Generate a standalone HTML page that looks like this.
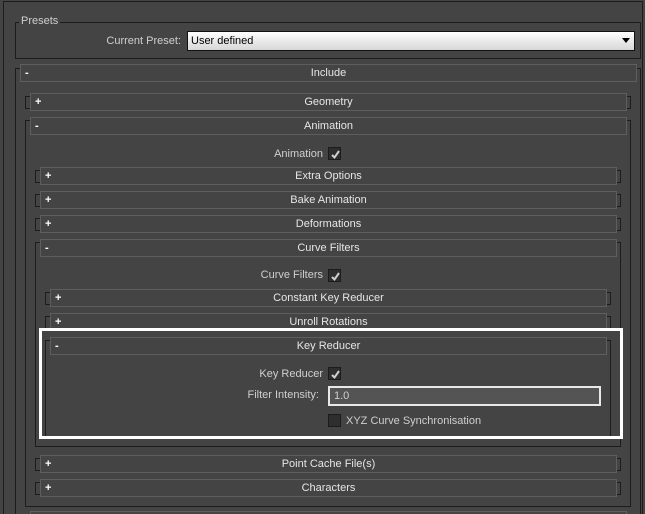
<!DOCTYPE html>
<html><head><meta charset="utf-8"><style>
html,body{margin:0;padding:0;width:645px;height:514px;overflow:hidden;}
body{background:#444;position:relative;font-family:"Liberation Sans",sans-serif;font-size:11px;color:#dcdcdc;}
.a{position:absolute;box-sizing:border-box;}
.box{border:1px solid #1c1c1c;}
.hd{border:1px solid #5e5e5e;background:#444;height:18px;line-height:17px;text-align:center;color:#e6e6e6;}
.hd .s{position:absolute;left:4px;top:0;font-weight:bold;color:#fff;}
.lbl{color:#cfcfcf;white-space:nowrap;}
.r{text-align:right;width:200px;}
.cb{width:13px;height:13px;background:#2e2e2e;border:1px solid #1c1c1c;}
.cb svg{position:absolute;left:1px;top:1px;}
</style></head><body>
<div class="a" style="left:3px;top:1px;width:640px;height:513px;border:1px solid #1c1c1c;border-bottom:none;"></div>
<div class="a box" style="left:15px;top:22px;width:626px;height:37px;"></div>
<div class="a lbl" style="left:19px;top:15px;background:#444;padding:0 2px;">Presets</div>
<div class="a lbl r" style="left:-19px;top:35px;">Current Preset:</div>
<div class="a" style="left:187px;top:31px;width:448px;height:20px;border:1px solid #111;background:linear-gradient(#fff,#e6e6e6 60%,#d8d8d8);color:#000;line-height:18px;padding-left:3px;">User defined
<svg class="a" style="right:4px;top:6px" width="8" height="5"><path d="M0 0H8L4 5Z" fill="#000"/></svg></div>

<div class="a" style="left:15px;top:68px;width:626px;height:446px;border:1px solid #1c1c1c;border-bottom:none;"></div>
<div class="a hd" style="left:20px;top:64px;width:617px;"><span class="s">-</span>Include</div>

<div class="a box" style="left:25px;top:96px;width:606px;height:13px;"></div>
<div class="a hd" style="left:30px;top:93px;width:597px;"><span class="s">+</span>Geometry</div>

<div class="a box" style="left:25px;top:120px;width:606px;height:387px;"></div>
<div class="a hd" style="left:30px;top:117px;width:597px;"><span class="s">-</span>Animation</div>
<div class="a lbl r" style="left:123px;top:148px;">Animation</div>
<div class="a cb" style="left:328px;top:147px;"><svg width="11" height="11"><path d="M2 6L4.5 8.5L9 2" stroke="#d0d0d0" stroke-width="2" fill="none"/></svg></div>

<div class="a box" style="left:35px;top:170px;width:586px;height:13px;"></div>
<div class="a hd" style="left:40px;top:167px;width:577px;"><span class="s">+</span>Extra Options</div>
<div class="a box" style="left:35px;top:194px;width:586px;height:13px;"></div>
<div class="a hd" style="left:40px;top:191px;width:577px;"><span class="s">+</span>Bake Animation</div>
<div class="a box" style="left:35px;top:218px;width:586px;height:13px;"></div>
<div class="a hd" style="left:40px;top:215px;width:577px;"><span class="s">+</span>Deformations</div>

<div class="a box" style="left:35px;top:242px;width:586px;height:205px;"></div>
<div class="a hd" style="left:40px;top:239px;width:577px;"><span class="s">-</span>Curve Filters</div>
<div class="a lbl r" style="left:123px;top:269px;">Curve Filters</div>
<div class="a cb" style="left:328px;top:269px;"><svg width="11" height="11"><path d="M2 6L4.5 8.5L9 2" stroke="#d0d0d0" stroke-width="2" fill="none"/></svg></div>

<div class="a box" style="left:45px;top:292px;width:566px;height:13px;"></div>
<div class="a hd" style="left:50px;top:289px;width:557px;"><span class="s">+</span>Constant Key Reducer</div>
<div class="a box" style="left:45px;top:316px;width:566px;height:13px;"></div>
<div class="a hd" style="left:50px;top:313px;width:557px;"><span class="s">+</span>Unroll Rotations</div>

<div class="a box" style="left:45px;top:340px;width:566px;height:97px;"></div>
<div class="a hd" style="left:50px;top:337px;width:557px;"><span class="s">-</span>Key Reducer</div>
<div class="a lbl r" style="left:123px;top:368px;">Key Reducer</div>
<div class="a cb" style="left:328px;top:367px;"><svg width="11" height="11"><path d="M2 6L4.5 8.5L9 2" stroke="#d0d0d0" stroke-width="2" fill="none"/></svg></div>
<div class="a lbl r" style="left:119px;top:389px;">Filter Intensity:</div>
<div class="a" style="left:328px;top:386px;width:273px;height:20px;border:2px solid #e8e8e8;background:#545454;color:#cfcfcf;line-height:16px;padding-left:4px;">1.0</div>
<div class="a cb" style="left:328px;top:414px;"></div>
<div class="a lbl" style="left:346px;top:415px;">XYZ Curve Synchronisation</div>

<div class="a" style="left:39px;top:328px;width:584px;height:111px;border:3px solid #fff;"></div>

<div class="a box" style="left:35px;top:458px;width:586px;height:13px;"></div>
<div class="a hd" style="left:40px;top:455px;width:577px;"><span class="s">+</span>Point Cache File(s)</div>
<div class="a box" style="left:35px;top:482px;width:586px;height:13px;"></div>
<div class="a hd" style="left:40px;top:479px;width:577px;"><span class="s">+</span>Characters</div>

<div class="a" style="left:30px;top:511px;width:597px;height:3px;border:1px solid #5e5e5e;border-bottom:none;"></div>
</body></html>
